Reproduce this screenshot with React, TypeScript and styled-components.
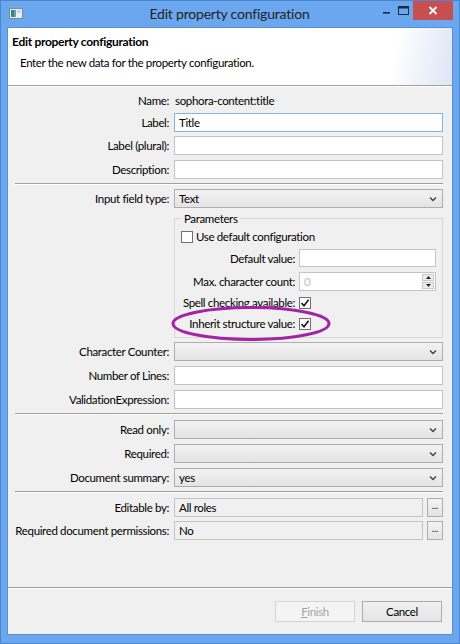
import React from 'react';
import styled, { createGlobalStyle } from 'styled-components';

const FONT = `Lato, "Noto Sans", "Open Sans", sans-serif`;

const GlobalStyle = createGlobalStyle`
  html, body {
    margin: 0;
    padding: 0;
    background: #ffffff;
  }
  body {
    font-family: ${FONT};
    font-size: 11.5px;
    letter-spacing: -0.35px;
    color: #000000;
  }
`;

const Window = styled.div`
  position: relative;
  width: 460px;
  height: 644px;
  box-sizing: border-box;
  background: #6ba7ee;
  border: 1px solid #4a86d0;
  display: flex;
  flex-direction: column;
  padding: 0 6px 8px 6px;
`;

const TitleBar = styled.div`
  height: 26px;
  display: flex;
  align-items: flex-start;
`;

const AppIcon = styled.div`
  width: 26px;
  padding: 7px 0 0 2px;
`;

const TitleText = styled.div`
  flex: 1;
  text-align: center;
  font-size: 14px;
  letter-spacing: -0.2px;
  line-height: 26px;
  color: #222;
  padding-left: 46px;
`;

const Controls = styled.div`
  display: flex;
  align-items: flex-start;
`;

const CtrlButton = styled.div<{ danger?: boolean }>`
  width: ${({ danger }) => (danger ? '40px' : '17px')};
  height: 19px;
  display: flex;
  align-items: center;
  justify-content: center;
  background: ${({ danger }) => (danger ? '#c74f4f' : 'transparent')};
  margin-left: ${({ danger }) => (danger ? '1px' : '0')};
`;

const Client = styled.div`
  flex: 1;
  background: #f0f0f0;
  border: 1px solid #5a8fd2;
  display: flex;
  flex-direction: column;
  min-height: 0;
`;

const Banner = styled.div`
  height: 57px;
  background: linear-gradient(100deg, #ffffff 0%, #ffffff 86%, #eef2fa 93%, #dde6f5 100%);
  border-bottom: 1px solid #a0a0a0;
  box-shadow: 0 1px 0 #ffffff;
  padding: 0 0 0 4px;
`;

const BannerTitle = styled.div`
  font-weight: bold;
  font-size: 12px;
  letter-spacing: -0.3px;
  line-height: 16px;
  padding-top: 6px;
`;

const BannerText = styled.div`
  line-height: 15px;
  padding: 5px 0 0 8px;
`;

const Body = styled.div`
  flex: 1;
  display: flex;
  flex-direction: column;
  padding: 6px 9px 0 7px;
`;

const Row = styled.div<{ top?: number; h?: number }>`
  display: grid;
  grid-template-columns: 154px 1fr;
  column-gap: 5px;
  align-items: center;
  margin-top: ${({ top }) => top ?? 4}px;
  height: ${({ h }) => h ?? 19}px;
`;

const Label = styled.div`
  text-align: right;
  white-space: nowrap;
  line-height: 15px;
`;

const Value = styled.div`
  padding-left: 1px;
  line-height: 15px;
`;

const TextBox = styled.div<{ focused?: boolean; readOnly?: boolean; muted?: boolean }>`
  box-sizing: border-box;
  height: 100%;
  border: 1px solid ${({ focused }) => (focused ? '#7eb4ea' : '#c3c3c3')};
  background: ${({ readOnly }) => (readOnly ? '#f0f0f0' : '#ffffff')};
  display: flex;
  align-items: center;
  padding-left: 4px;
  color: ${({ muted }) => (muted ? '#bdbdbd' : '#000')};
  line-height: 15px;
  position: relative;
`;

const Select = styled.div`
  box-sizing: border-box;
  height: 100%;
  border: 1px solid #adadad;
  background: linear-gradient(#f3f3f3, #e4e4e4);
  display: flex;
  align-items: center;
  justify-content: space-between;
  padding: 0 5px 0 4px;
  line-height: 15px;
`;

const Separator = styled.div<{ top?: number }>`
  margin-top: ${({ top }) => top ?? 4}px;
  height: 1px;
  background: #a0a0a0;
  border-bottom: 1px solid #ffffff;
`;

const GroupRow = styled.div`
  display: grid;
  grid-template-columns: 154px 1fr;
  column-gap: 5px;
  margin-top: 3px;
`;

const Group = styled.fieldset`
  margin: 0;
  padding: 0 6px 6px 6px;
  border: 1px solid #d7d7d7;
  min-width: 0;
`;

const Legend = styled.legend`
  padding: 0 2px;
  margin-left: 1px;
  line-height: 15px;
`;

const InnerRow = styled.div<{ top?: number; h?: number }>`
  display: grid;
  grid-template-columns: 114px 1fr;
  column-gap: 4px;
  align-items: center;
  margin-top: ${({ top }) => top ?? 4}px;
  height: ${({ h }) => h ?? 19}px;
`;

const CheckLine = styled.label<{ top?: number }>`
  display: flex;
  align-items: center;
  gap: 3px;
  margin-top: ${({ top }) => top ?? 2}px;
  height: 15px;
  line-height: 15px;
`;

const CheckBox = styled.span`
  box-sizing: border-box;
  width: 12px;
  height: 12px;
  border: 1px solid #707070;
  background: #ffffff;
  display: inline-flex;
  align-items: center;
  justify-content: center;
`;

const Spinner = styled.div`
  position: absolute;
  right: 1px;
  top: 1px;
  bottom: 1px;
  width: 12px;
  display: flex;
  flex-direction: column;
  gap: 1px;
`;

const SpinBtn = styled.div`
  flex: 1;
  border: 1px solid #c9c9c9;
  background: #ececec;
  display: flex;
  align-items: center;
  justify-content: center;
`;

const PickerLine = styled.div`
  display: flex;
  gap: 4px;
  height: 100%;
`;

const DotsButton = styled.div`
  box-sizing: border-box;
  width: 16px;
  height: 100%;
  border: 1px solid #adadad;
  background: linear-gradient(#f3f3f3, #e4e4e4);
  font-size: 9px;
  letter-spacing: 0;
  line-height: 14px;
  text-align: center;
`;

const Footer = styled.div`
  border-top: 1px solid #a0a0a0;
  box-shadow: inset 0 1px 0 #ffffff;
  display: flex;
  justify-content: flex-end;
  gap: 7px;
  padding: 13px 10px 12px 0;
`;

const Button = styled.div<{ disabled?: boolean }>`
  box-sizing: border-box;
  width: 80px;
  height: 21px;
  display: flex;
  align-items: center;
  justify-content: center;
  border: 1px solid ${({ disabled }) => (disabled ? '#d5d5d5' : '#acacac')};
  background: ${({ disabled }) => (disabled ? '#f4f4f4' : 'linear-gradient(#f0f0f0, #e5e5e5)')};
  color: ${({ disabled }) => (disabled ? '#a3a3a3' : '#000')};
  line-height: 15px;

  u {
    text-decoration: underline;
  }
`;

const Annotation = styled.svg`
  position: absolute;
  left: 168px;
  top: 302px;
  overflow: visible;
`;

const Chevron = () => (
  <svg width="8" height="6" viewBox="0 0 8 6">
    <path d="M1 1.5 L4 4.5 L7 1.5" stroke="#404040" strokeWidth="1.4" fill="none" />
  </svg>
);

const Tick = () => (
  <svg width="10" height="10" viewBox="0 0 10 10">
    <path d="M1.5 5.2 L4 7.8 L8.6 1.8" stroke="#1a1a1a" strokeWidth="1.7" fill="none" />
  </svg>
);

const Field = ({ label, children, top, h }: { label: string; children: React.ReactNode; top?: number; h?: number }) => (
  <Row top={top} h={h}>
    <Label>{label}</Label>
    <div style={{ height: '100%' }}>{children}</div>
  </Row>
);

const Combo = ({ value }: { value?: string }) => (
  <Select>
    <span>{value ?? ''}</span>
    <Chevron />
  </Select>
);

const App = () => {
  return (
    <>
      <GlobalStyle />
      <Window>
        <TitleBar>
          <AppIcon>
            <svg width="14" height="11" viewBox="0 0 14 11">
              <rect x="0.5" y="0.5" width="13" height="10" fill="#e8eef3" stroke="#7c8a96" />
              <rect x="2" y="2" width="3" height="7" fill="#3c8a5a" />
              <rect x="5" y="2" width="2" height="7" fill="#5aa2c8" />
              <rect x="8" y="2" width="4" height="3" fill="#c9d4dc" />
            </svg>
          </AppIcon>
          <TitleText>Edit property configuration</TitleText>
          <Controls>
            <CtrlButton>
              <svg width="9" height="9" viewBox="0 0 9 9">
                <rect x="1" y="6" width="7" height="1.6" fill="#1c2b3c" />
              </svg>
            </CtrlButton>
            <CtrlButton>
              <svg width="11" height="9" viewBox="0 0 11 9">
                <rect x="0.5" y="0.5" width="10" height="8" fill="none" stroke="#1c2b3c" />
                <rect x="0.5" y="0.5" width="10" height="2" fill="#1c2b3c" />
              </svg>
            </CtrlButton>
            <CtrlButton danger>
              <svg width="10" height="9" viewBox="0 0 10 9">
                <path d="M1.5 1 L8.5 8 M8.5 1 L1.5 8" stroke="#ffffff" strokeWidth="1.8" />
              </svg>
            </CtrlButton>
          </Controls>
        </TitleBar>

        <Client>
          <Banner>
            <BannerTitle>Edit property configuration</BannerTitle>
            <BannerText>Enter the new data for the property configuration.</BannerText>
          </Banner>

          <Body>
            <Row top={0} h={17}>
              <Label>Name:</Label>
              <Value>sophora-content:title</Value>
            </Row>
            <Field label="Label:">
              <TextBox focused>Title</TextBox>
            </Field>
            <Field label="Label (plural):">
              <TextBox />
            </Field>
            <Field label="Description:" top={5}>
              <TextBox />
            </Field>
            <Separator top={4} />
            <Field label="Input field type:" top={4}>
              <Combo value="Text" />
            </Field>

            <GroupRow>
              <div />
              <Group>
                <Legend>Parameters</Legend>
                <CheckLine top={3}>
                  <CheckBox />
                  <span>Use default configuration</span>
                </CheckLine>
                <InnerRow top={5} h={18}>
                  <Label>Default value:</Label>
                  <TextBox />
                </InnerRow>
                <InnerRow top={5}>
                  <Label>Max. character count:</Label>
                  <TextBox muted>
                    0
                    <Spinner>
                      <SpinBtn>
                        <svg width="5" height="3" viewBox="0 0 5 3">
                          <path d="M0 3 L2.5 0 L5 3 Z" fill="#222" />
                        </svg>
                      </SpinBtn>
                      <SpinBtn>
                        <svg width="5" height="3" viewBox="0 0 5 3">
                          <path d="M0 0 L2.5 3 L5 0 Z" fill="#222" />
                        </svg>
                      </SpinBtn>
                    </Spinner>
                  </TextBox>
                </InnerRow>
                <InnerRow top={4} h={15}>
                  <Label>Spell checking available:</Label>
                  <CheckBox>
                    <Tick />
                  </CheckBox>
                </InnerRow>
                <InnerRow top={6} h={15}>
                  <Label>Inherit structure value:</Label>
                  <CheckBox>
                    <Tick />
                  </CheckBox>
                </InnerRow>
              </Group>
            </GroupRow>

            <Field label="Character Counter:" top={4}>
              <Combo />
            </Field>
            <Field label="Number of Lines:" top={5}>
              <TextBox />
            </Field>
            <Field label="ValidationExpression:" top={5}>
              <TextBox />
            </Field>
            <Separator top={4} />
            <Field label="Read only:" top={5}>
              <Combo />
            </Field>
            <Field label="Required:" top={5}>
              <Combo />
            </Field>
            <Field label="Document summary:" top={5}>
              <Combo value="yes" />
            </Field>
            <Separator top={4} />
            <Field label="Editable by:" top={5}>
              <PickerLine>
                <TextBox readOnly style={{ flex: 1 }}>All roles</TextBox>
                <DotsButton>...</DotsButton>
              </PickerLine>
            </Field>
            <Field label="Required document permissions:" top={4}>
              <PickerLine>
                <TextBox readOnly style={{ flex: 1 }}>No</TextBox>
                <DotsButton>...</DotsButton>
              </PickerLine>
            </Field>
          </Body>

          <Footer>
            <Button disabled>
              <span>
                <u>F</u>inish
              </span>
            </Button>
            <Button>Cancel</Button>
          </Footer>
        </Client>

        <Annotation width="162" height="40" viewBox="0 0 162 40">
          <ellipse cx="82" cy="20.5" rx="78" ry="16" fill="none" stroke="#a323a6" strokeWidth="3" />
        </Annotation>
      </Window>
    </>
  );
};

export default App;
